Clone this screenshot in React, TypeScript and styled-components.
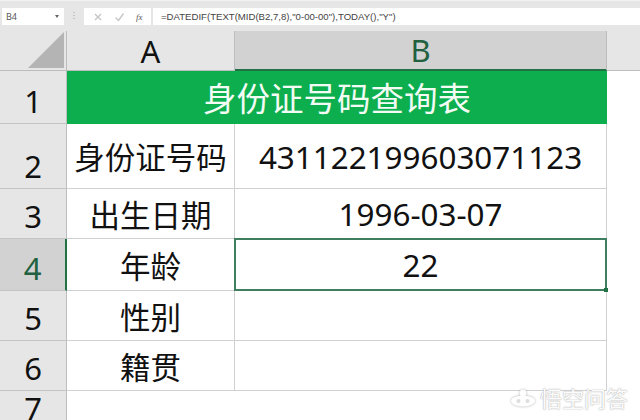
import { createGlobalStyle, styled } from "styled-components";

const Global = createGlobalStyle`
  html, body {
    margin: 0;
    padding: 0;
    background: #fff;
    overflow: hidden;
  }
`;
const Page = styled.div`
  position: relative;
  width: 640px;
  height: 420px;
  overflow: hidden;
  font-family: "Noto Sans", "Noto Sans CJK SC", sans-serif;
  color: #111;
`;
const FormulaBar = styled.div`
  display: flex;
  align-items: center;
  box-sizing: border-box;
  height: 31px;
  padding: 7px 0 6px 2px;
  background: #e6e6e6;
  border-top: 1px solid #f2f2f2;
`;
const NameBox = styled.div`
  display: flex;
  align-items: center;
  justify-content: space-between;
  box-sizing: border-box;
  width: 62px;
  height: 17px;
  padding: 0 5px 0 4px;
  background: #fff;
  font-size: 9px;
  color: #555;
`;
const Caret = styled.span`
  width: 0;
  height: 0;
  border-left: 2.5px solid transparent;
  border-right: 2.5px solid transparent;
  border-top: 3px solid #666;
`;
const Dots = styled.div`
  width: 2px;
  height: 9px;
  margin: 0 9px 0 9px;
  background: repeating-linear-gradient(#c4c4c4 0 1px, transparent 1px 3px);
`;
const Buttons = styled.div`
  display: flex;
  align-items: center;
  justify-content: space-around;
  box-sizing: border-box;
  width: 67px;
  height: 17px;
  padding: 0 3px;
  background: #fff;
  margin-right: 2px;
`;
const FxLabel = styled.span`
  font-family: "Liberation Serif", serif;
  font-style: italic;
  font-size: 9px;
  color: #555;
`;
const Formula = styled.div`
  flex: 1;
  height: 17px;
  line-height: 17px;
  padding-left: 8px;
  background: #fff;
  font-family: "Liberation Sans", sans-serif;
  font-size: 9.6px;
  color: #444;
  white-space: nowrap;
`;
const Sheet = styled.div`
  display: grid;
  grid-template-columns: 67px 168px 372px 33px;
  grid-template-rows: 40px 53px 65px 50px 52px 50px 50px 40px;
`;
const HeaderStrip = styled.div`
  background: #e6e6e6;
  border-bottom: 1px solid #bdbdbd;
`;
const Corner = styled.div`
  display: flex;
  align-items: flex-end;
  justify-content: flex-end;
  padding: 0 2px 2px 0;
  background: #e6e6e6;
  border-right: 1px solid #bdbdbd;
  border-bottom: 1px solid #bdbdbd;
  box-sizing: border-box;
`;
const ColHeader = styled.div<{ $active?: boolean }>`
  display: flex;
  align-items: center;
  justify-content: center;
  box-sizing: border-box;
  background: ${(p) => (p.$active ? "#d2d2d2" : "#e6e6e6")};
  color: ${(p) => (p.$active ? "#21613f" : "#111")};
  border-right: 1px solid #bdbdbd;
  border-bottom: ${(p) => (p.$active ? "2px solid #217346" : "1px solid #bdbdbd")};
  font-size: 31px;
`;
const RowHeader = styled.div<{ $active?: boolean }>`
  display: flex;
  align-items: flex-end;
  justify-content: center;
  box-sizing: border-box;
  background: ${(p) => (p.$active ? "#d2d2d2" : "#e6e6e6")};
  color: ${(p) => (p.$active ? "#21613f" : "#111")};
  border-right: ${(p) => (p.$active ? "2px solid #217346" : "1px solid #bdbdbd")};
  border-bottom: 1px solid #c4c4c4;
  font-size: 31px;
  line-height: 44px;
`;
const TitleCell = styled.div`
  grid-column: span 2;
  display: flex;
  align-items: center;
  justify-content: center;
  background: #0cae4e;
  color: #f2fbf4;
  font-size: 33.5px;
  padding-bottom: 2px;
`;
const Cell = styled.div<{ $numeric?: boolean }>`
  display: flex;
  align-items: center;
  justify-content: center;
  box-sizing: border-box;
  background: #fff;
  border-right: 1px solid #d0d0d0;
  border-bottom: 1px solid #d0d0d0;
  font-size: ${(p) => (p.$numeric ? 31.4 : 30.5)}px;
  white-space: nowrap;
`;
const SelectedCell = styled(Cell)`
  position: relative;
  margin: -1px 0 0 -1px;
  border: 2px solid #3f7f5f;
  &::after {
    content: "";
    position: absolute;
    right: -3px;
    bottom: -3px;
    width: 4px;
    height: 4px;
    background: #217346;
  }
`;
const Side = styled.div`
  background: #fff;
`;
const Watermark = styled.div`
  position: absolute;
  right: 12px;
  bottom: 10px;
  display: flex;
  align-items: center;
  gap: 4px;
  color: #fbfbfb;
  font-size: 22px;
  line-height: 24px;
  text-shadow: 0 0 1px #aaa, 0 0 2px #ccc;
  svg {
    filter: drop-shadow(0 0 1px #aaa);
  }
`;

export default function App() {
  return (
    <Page>
      <Global />
      <FormulaBar>
        <NameBox>
          B4
          <Caret />
        </NameBox>
        <Dots />
        <Buttons>
          <svg width="10" height="10" viewBox="0 0 10 10">
            <path d="M2 2l6 6M8 2l-6 6" stroke="#c4c4c4" strokeWidth="1.3" />
          </svg>
          <svg width="11" height="10" viewBox="0 0 11 10">
            <path d="M1.5 5.5l3 3 5-7" stroke="#c4c4c4" strokeWidth="1.3" fill="none" />
          </svg>
          <FxLabel>fx</FxLabel>
        </Buttons>
        <Formula>=DATEDIF(TEXT(MID(B2,7,8),"0-00-00"),TODAY(),"Y")</Formula>
      </FormulaBar>
      <Sheet>
        <Corner>
          <svg width="36" height="36" viewBox="0 0 36 36">
            <path d="M36 0V36H0Z" fill="#b4b4b4" />
          </svg>
        </Corner>
        <ColHeader>A</ColHeader>
        <ColHeader $active>B</ColHeader>
        <HeaderStrip />

        <RowHeader>1</RowHeader>
        <TitleCell>身份证号码查询表</TitleCell>
        <Side />

        <RowHeader>2</RowHeader>
        <Cell>身份证号码</Cell>
        <Cell $numeric>431122199603071123</Cell>
        <Side />

        <RowHeader>3</RowHeader>
        <Cell>出生日期</Cell>
        <Cell $numeric>1996-03-07</Cell>
        <Side />

        <RowHeader $active>4</RowHeader>
        <Cell>年龄</Cell>
        <SelectedCell $numeric>22</SelectedCell>
        <Side />

        <RowHeader>5</RowHeader>
        <Cell>性别</Cell>
        <Cell />
        <Side />

        <RowHeader>6</RowHeader>
        <Cell>籍贯</Cell>
        <Cell />
        <Side />

        <RowHeader>7</RowHeader>
      </Sheet>
      <Watermark>
        <svg width="26" height="22" viewBox="0 0 26 20">
          <circle cx="13" cy="5" r="3.5" fill="#fff" />
          <ellipse cx="13" cy="13" rx="12" ry="5.5" fill="#fff" />
          <circle cx="8.5" cy="13" r="2" fill="#ddd" />
          <circle cx="17.5" cy="13" r="2" fill="#ddd" />
        </svg>
        悟空问答
      </Watermark>
    </Page>
  );
}
